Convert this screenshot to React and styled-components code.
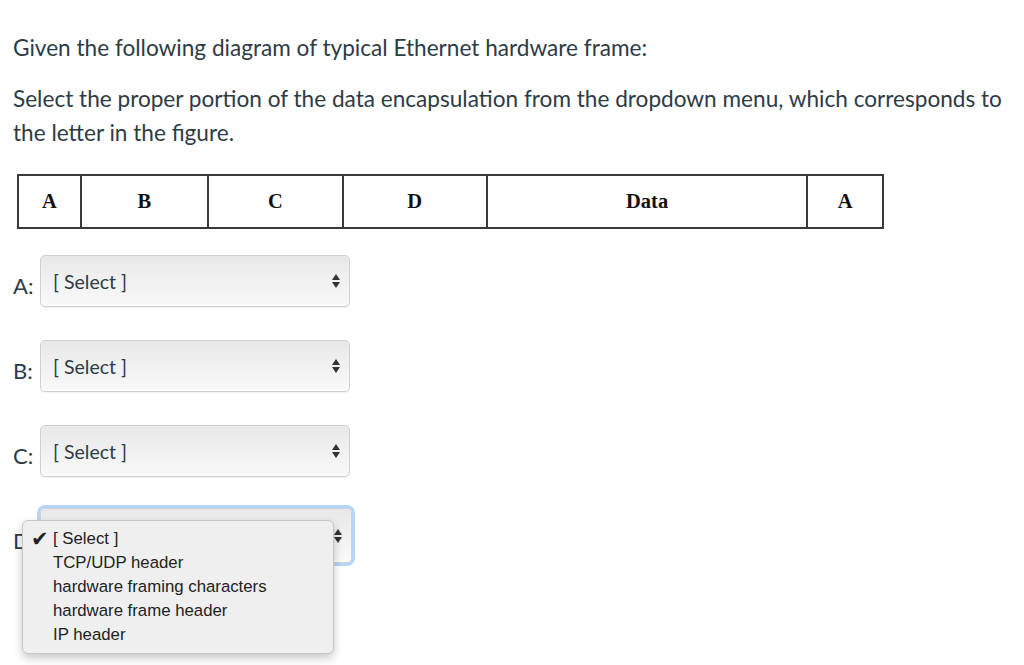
import React from "react";
import styled, { createGlobalStyle } from "styled-components";

const Global = createGlobalStyle`
  body {
    margin: 0;
    background: #fff;
    font-family: Lato, "Open Sans", sans-serif;
    color: #2d3b45;
  }
`;

const Page = styled.div`
  padding: 31px 0 0 13px;
  width: 1011px;
  min-height: 665px;
  box-sizing: border-box;
`;

const Para = styled.p`
  margin: 0 0 ${(p) => p.gap || 0}px;
  font-size: 22.6px;
  line-height: 34px;
`;

const Frame = styled.div`
  display: flex;
  margin: 24px 0 26px 4px;
  width: 867px;
  height: 55px;
  box-sizing: border-box;
  border: 2px solid #3a3a3a;
`;

const Cell = styled.div`
  width: ${(p) => p.w}px;
  display: flex;
  align-items: center;
  justify-content: center;
  font-family: "Liberation Serif", serif;
  font-weight: bold;
  font-size: 20.5px;
  color: #111;
  border-left: ${(p) => (p.first ? "none" : "2px solid #3a3a3a")};
  box-sizing: border-box;
`;

const Rows = styled.div`
  display: flex;
  flex-direction: column;
  gap: 33px;
`;

const Row = styled.div`
  display: flex;
  align-items: center;
  position: relative;
`;

const Label = styled.span`
  width: 27px;
  font-size: 22px;
  padding-top: 8px;
`;

const SelectBox = styled.div`
  width: 310px;
  height: 52px;
  box-sizing: border-box;
  border: 1px solid #cfcfcf;
  border-radius: 5px;
  background: linear-gradient(#e8e8e8, #f9f9f9);
  box-shadow: inset 0 -1px 2px rgba(255, 255, 255, 0.8), 0 1px 1px rgba(0, 0, 0, 0.05);
  display: flex;
  align-items: center;
  justify-content: space-between;
  padding: 0 9px 0 12px;
  font-size: 19.5px;
  color: #2d3b45;
  ${(p) =>
    p.focused &&
    `
    width: 312px;
    height: 55px;
    margin-top: -2px;
    outline: 3px solid #b4d6fa;
    outline-offset: 0;
  `}
`;

const Arrows = styled.svg`
  width: 8px;
  height: 14px;
  display: block;
`;

const Popup = styled.div`
  position: absolute;
  left: 9px;
  top: 10px;
  width: 312px;
  box-sizing: border-box;
  padding: 6px 0 6px;
  background: #efefef;
  border: 1px solid #c6c6c6;
  border-radius: 6px;
  box-shadow: 0 4px 10px rgba(0, 0, 0, 0.22);
  font-family: "Liberation Sans", Arial, sans-serif;
  font-size: 16.8px;
  color: #222;
`;

const Item = styled.div`
  display: flex;
  align-items: center;
  height: 24px;
  padding-left: 30px;
  position: relative;
`;

const Check = styled.span`
  position: absolute;
  left: 8px;
  top: 0;
  font-family: "DejaVu Sans", sans-serif;
  font-size: 21px;
  line-height: 24px;
  color: #222;
`;

const options = [
  "[ Select ]",
  "TCP/UDP header",
  "hardware framing characters",
  "hardware frame header",
  "IP header",
];

const cols = [
  ["A", 61],
  ["B", 128],
  ["C", 135],
  ["D", 145],
  ["Data", 322],
  ["A", 76],
];

function UpDown() {
  return (
    <Arrows viewBox="0 0 8 14">
      <path d="M4 0 L8 6 L0 6 Z" fill="#333" />
      <path d="M0 8 L8 8 L4 14 Z" fill="#333" />
    </Arrows>
  );
}

export default function App() {
  return (
    <Page>
      <Global />
      <Para gap={17}>Given the following diagram of typical Ethernet hardware frame:</Para>
      <Para>
        Select the proper portion of the data encapsulation from the dropdown menu, which corresponds to
        the letter in the figure.
      </Para>
      <Frame>
        {cols.map(([t, w], i) => (
          <Cell key={i} w={w} first={i === 0}>
            {t}
          </Cell>
        ))}
      </Frame>
      <Rows>
        {["A", "B", "C"].map((l) => (
          <Row key={l}>
            <Label>{l}:</Label>
            <SelectBox>
              <span>[ Select ]</span>
              <UpDown />
            </SelectBox>
          </Row>
        ))}
        <Row>
          <Label>D:</Label>
          <SelectBox focused>
            <span />
            <UpDown />
          </SelectBox>
          <Popup>
            {options.map((o, i) => (
              <Item key={o}>
                {i === 0 && <Check>✔</Check>}
                {o}
              </Item>
            ))}
          </Popup>
        </Row>
      </Rows>
    </Page>
  );
}
